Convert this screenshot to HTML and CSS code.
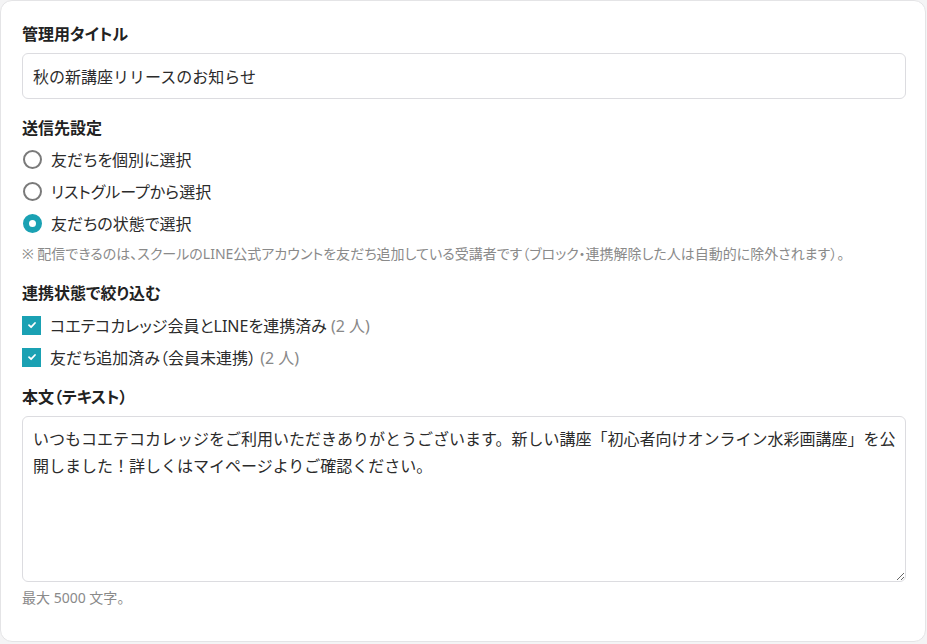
FILE: index.html
```html
<!DOCTYPE html>
<html lang="ja">
<head>
<meta charset="utf-8">
<title>配信設定</title>
<link rel="stylesheet" href="styles.css">
</head>
<body>
<div class="card">
  <div class="field">
    <label class="label" for="title">管理用タイトル</label>
    <input id="title" class="text-input" type="text" value="秋の新講座リリースのお知らせ">
  </div>

  <div class="field field-gap">
    <div class="label">送信先設定</div>
    <div class="options">
      <label class="option"><input class="radio" type="radio" name="target"><span>友だちを個別に選択</span></label>
      <label class="option"><input class="radio" type="radio" name="target"><span>リストグループから選択</span></label>
      <label class="option"><input class="radio" type="radio" name="target" checked><span>友だちの状態で選択</span></label>
    </div>
    <p class="note note-radio">※ 配信できるのは、スクールのLINE公式アカウントを友だち追加している受講者です（ブロック・連携解除した人は自動的に除外されます）。</p>
  </div>

  <div class="field field-gap">
    <div class="label">連携状態で絞り込む</div>
    <div class="options options-check">
      <label class="option"><input class="check" type="checkbox" checked><span class="check-mark"><svg viewBox="0 0 10 10" width="10" height="10"><path d="M2 5.2 L4.1 7.2 L8 3" fill="none" stroke="#fff" stroke-width="1.8" stroke-linecap="round" stroke-linejoin="round"/></svg></span><span>コエテコカレッジ会員とLINEを連携済み <span class="count">(2 人)</span></span></label>
      <label class="option"><input class="check" type="checkbox" checked><span class="check-mark"><svg viewBox="0 0 10 10" width="10" height="10"><path d="M2 5.2 L4.1 7.2 L8 3" fill="none" stroke="#fff" stroke-width="1.8" stroke-linecap="round" stroke-linejoin="round"/></svg></span><span>友だち追加済み（会員未連携） <span class="count">(2 人)</span></span></label>
    </div>
  </div>

  <div class="field field-gap-sm">
    <label class="label" for="body">本文（テキスト）</label>
    <textarea id="body" class="textarea">いつもコエテコカレッジをご利用いただきありがとうございます。新しい講座「初心者向けオンライン水彩画講座」を公開しました！詳しくはマイページよりご確認ください。</textarea>
    <p class="note note-count">最大 5000 文字。</p>
  </div>
</div>
</body>
</html>
```

FILE: styles.css
```css
* { box-sizing: border-box; }

html, body {
  margin: 0;
  padding: 0;
}

body {
  background: #f4f4f5;
  font-family: "Noto Sans", "Noto Sans CJK JP", sans-serif;
  font-feature-settings: "palt";
  color: #2b2b2b;
  width: 927px;
  height: 644px;
  overflow: hidden;
}

.card {
  width: 926px;
  height: 642px;
  background: #ffffff;
  border: 1px solid #e4e4e6;
  border-radius: 12px;
  padding: 22px 19px 0 21px;
  display: flex;
  flex-direction: column;
}

.field {
  display: flex;
  flex-direction: column;
}

.field-gap { margin-top: 18px; }
.field-gap-sm { margin-top: 13px; }

.label {
  display: block;
  font-size: 16px;
  font-weight: 700;
  line-height: 22px;
  color: #222;
  margin-bottom: 8px;
}

.field-gap .label { margin-bottom: 4px; }

.text-input {
  width: 884px;
  height: 46px;
  border: 1px solid #dcdce0;
  border-radius: 6px;
  padding: 0 10px;
  font-family: inherit;
  font-feature-settings: normal;
  font-size: 16px;
  color: #2b2b2b;
  background: #fff;
  outline: none;
}

.options {
  display: flex;
  flex-direction: column;
}

.option {
  display: flex;
  align-items: center;
  gap: 9px;
  height: 32px;
  font-size: 16px;
  color: #2b2b2b;
  cursor: pointer;
}

.radio {
  appearance: none;
  -webkit-appearance: none;
  margin: 0 0 0 1px;
  width: 19px;
  height: 19px;
  border: 2px solid #7a7a7a;
  border-radius: 50%;
  background: #fff;
  flex: none;
}

.radio:checked {
  border: 6px solid #1aa1b3;
  background: #fff;
}

.check {
  display: none;
}

.check-mark {
  width: 19px;
  height: 19px;
  background: #1aa1b3;
  display: flex;
  align-items: center;
  justify-content: center;
  flex: none;
  margin-left: 0;
}

.options-check {
  margin-top: 1px;
}

.count {
  color: #888;
}

.note {
  margin: 0;
  font-size: 14px;
  line-height: 20px;
  color: #8a8a8a;
}

.note-radio { margin-top: 5px; }
.note-count { margin-top: 6px; }

.textarea {
  width: 884px;
  height: 166px;
  border: 1px solid #dcdce0;
  border-radius: 6px;
  padding: 9px 3px 9px 10px;
  font-family: inherit;
  font-feature-settings: normal;
  font-size: 16px;
  line-height: 27px;
  color: #2b2b2b;
  background: #fff;
  resize: vertical;
  outline: none;
  display: block;
}
```
